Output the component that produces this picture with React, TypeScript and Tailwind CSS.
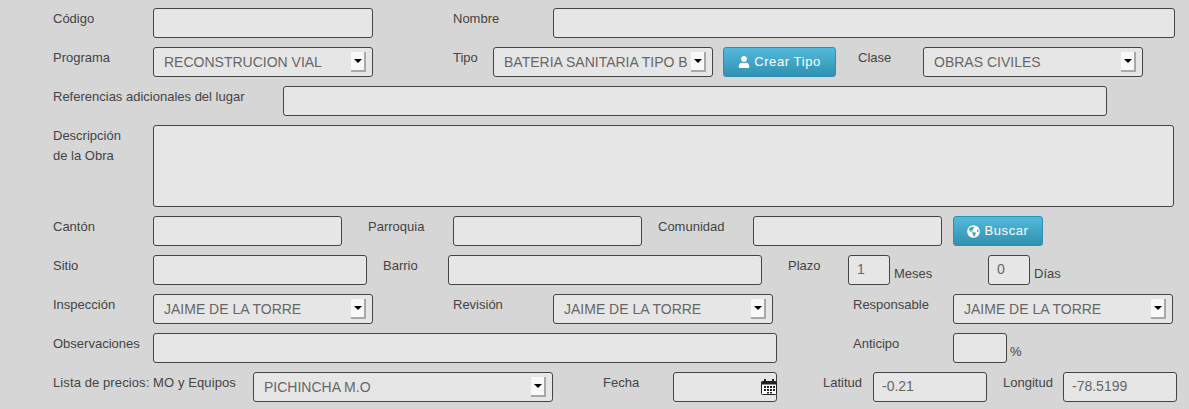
import { FaGlobeAmericas, FaUser } from "react-icons/fa";

const labelCls = "shrink-0 pt-px text-[13px] leading-5 text-[#444]";
const boxCls =
  "h-[30px] shrink-0 rounded-[3px] border border-[#444] bg-[#e6e6e6] text-[14px] text-[#666] outline-none";

function Label({ text, className }: { text: string; className: string }) {
  return <div className={`${labelCls} ${className}`}>{text}</div>;
}

function Field({ value = "", className }: { value?: string; className: string }) {
  return <input readOnly value={value} className={`${boxCls} px-2 pb-[2px] ${className}`} />;
}

function SelectBox({ value, className }: { value: string; className: string }) {
  return (
    <div className={`${boxCls} ${className} flex items-center justify-between pl-[10px] pr-[6px]`}>
      <span className="overflow-hidden whitespace-nowrap pt-px">{value}</span>
      <span className="flex h-[20px] w-[15px] shrink-0 items-center justify-center border-r-2 border-b-2 border-[#a8a8a8] bg-[#f8f8f8]">
        <span className="h-0 w-0 border-x-[4px] border-t-[4px] border-x-transparent border-t-black" />
      </span>
    </div>
  );
}

function InfoButton({ children, className }: { children: React.ReactNode; className: string }) {
  return (
    <button
      className={`flex h-[30px] shrink-0 items-center justify-center gap-1 rounded-[3px] border border-[#2f8fb0] bg-gradient-to-b from-[#54b9dc] to-[#2f92b2] text-[13px] tracking-[0.6px] text-white ${className}`}
    >
      {children}
    </button>
  );
}

export default function App() {
  return (
    <div className="h-[409px] overflow-hidden bg-[#d6d6d6] pl-[53px] pt-2 font-['Liberation_Sans',sans-serif]">
      <div className="flex flex-col gap-[9px]">
        <div className="flex">
          <Label text="Código" className="w-[100px]" />
          <Field className="w-[220px]" />
          <Label text="Nombre" className="ml-[80px] w-[100px]" />
          <Field className="w-[622px]" />
        </div>

        <div className="flex">
          <Label text="Programa" className="w-[100px]" />
          <SelectBox value="RECONSTRUCION VIAL" className="w-[220px]" />
          <Label text="Tipo" className="ml-[80px] w-[40px]" />
          <SelectBox value="BATERIA SANITARIA TIPO B" className="w-[220px]" />
          <InfoButton className="ml-[10px] w-[113px]">
            <FaUser size={12} />
            Crear Tipo
          </InfoButton>
          <Label text="Clase" className="ml-[22px] w-[65px]" />
          <SelectBox value="OBRAS CIVILES" className="w-[220px]" />
        </div>

        <div className="flex">
          <Label text="Referencias adicionales del lugar" className="w-[230px]" />
          <Field className="w-[824px]" />
        </div>

        <div className="flex">
          <div className={`${labelCls} w-[100px]`}>
            Descripción
            <br />
            de la Obra
          </div>
          <textarea readOnly className={`${boxCls} h-[82px] w-[1021px] resize-none px-2`} />
        </div>

        <div className="flex">
          <Label text="Cantón" className="w-[100px]" />
          <Field className="w-[189px]" />
          <Label text="Parroquia" className="ml-[26px] w-[85px]" />
          <Field className="w-[189px]" />
          <Label text="Comunidad" className="ml-[16px] w-[95px]" />
          <Field className="w-[189px]" />
          <InfoButton className="ml-[11px] w-[90px]">
            <FaGlobeAmericas size={13} />
            Buscar
          </InfoButton>
        </div>

        <div className="flex">
          <Label text="Sitio" className="w-[100px]" />
          <Field className="w-[214px]" />
          <Label text="Barrio" className="ml-[16px] w-[65px]" />
          <Field className="w-[314px]" />
          <Label text="Plazo" className="ml-[26px] w-[60px]" />
          <Field value="1" className="w-[42px]" />
          <Label text="Meses" className="ml-1 mt-2 w-[94px]" />
          <Field value="0" className="w-[42px]" />
          <Label text="Días" className="ml-1 mt-2" />
        </div>

        <div className="flex">
          <Label text="Inspección" className="w-[100px]" />
          <SelectBox value="JAIME DE LA TORRE" className="w-[220px]" />
          <Label text="Revisión" className="ml-[80px] w-[100px]" />
          <SelectBox value="JAIME DE LA TORRE" className="w-[220px]" />
          <Label text="Responsable" className="ml-[80px] w-[100px]" />
          <SelectBox value="JAIME DE LA TORRE" className="w-[220px]" />
        </div>

        <div className="flex">
          <Label text="Observaciones" className="w-[100px]" />
          <Field className="w-[624px]" />
          <Label text="Anticipo" className="ml-[76px] w-[100px]" />
          <Field className="w-[54px]" />
          <Label text="%" className="ml-[3px] mt-2" />
        </div>

        <div className="flex">
          <Label text="Lista de precios: MO y Equipos" className="w-[200px] tracking-[0.1px]" />
          <SelectBox value="PICHINCHA M.O" className="w-[300px]" />
          <Label text="Fecha" className="ml-[50px] w-[70px]" />
          <div className="relative shrink-0">
            <Field className="w-[104px]" />
            <svg className="absolute right-0 top-[7px]" width="16" height="16" viewBox="0 0 16 16">
              <rect x="0.5" y="2.5" width="15" height="13" rx="1" fill="#fff" stroke="#222" />
              <rect x="0.5" y="2.5" width="15" height="3" fill="#222" />
              <rect x="3" y="0" width="2" height="4" fill="#222" />
              <rect x="11" y="0" width="2" height="4" fill="#222" />
              <path d="M3 7h2v2H3zM6 7h2v2H6zM9 7h2v2H9zM12 7h2v2h-2zM3 10h2v2H3zM6 10h2v2H6zM9 10h2v2H9zM12 10h2v2h-2zM6 13h2v1.500H6zM9 13h2v1.500H9z" fill="#222" />
            </svg>
          </div>
          <Label text="Latitud" className="ml-[46px] w-[50px]" />
          <Field value="-0.21" className="w-[114px]" />
          <Label text="Longitud" className="ml-4 w-[60px]" />
          <Field value="-78.5199" className="w-[114px]" />
        </div>
      </div>
    </div>
  );
}
